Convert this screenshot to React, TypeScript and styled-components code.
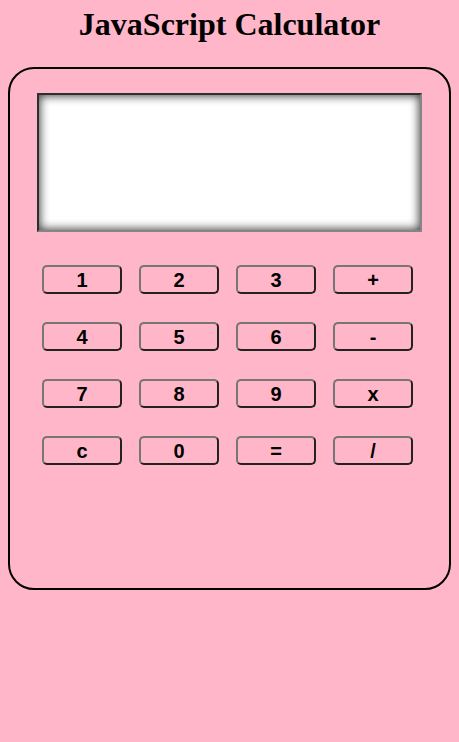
import React from "react";
import styled, { createGlobalStyle } from "styled-components";

const Global = createGlobalStyle`
  html, body { margin: 0; padding: 0; background: #ffb6c8; }
  body { font-family: "Liberation Serif", serif; }
`;

const Page = styled.div`
  padding: 0 8px 8px;
`;

const Title = styled.h1`
  margin: 0;
  padding-top: 6px;
  height: 67px;
  box-sizing: border-box;
  text-align: center;
  font-family: "Liberation Serif", serif;
  font-weight: bold;
  font-size: 32px;
  line-height: 37px;
  color: #000;
`;

const Calculator = styled.div`
  box-sizing: border-box;
  width: 443px;
  height: 523px;
  border: 2px solid #000;
  border-radius: 26px;
  padding: 24px 27px 0 27px;
`;

const Screen = styled.div`
  box-sizing: border-box;
  width: 385px;
  height: 139px;
  background: #fff;
  border-style: solid;
  border-width: 2px;
  border-color: #2e2e2e #858585 #858585 #2e2e2e;
  box-shadow: inset 0 0 10px 1px rgba(0, 0, 0, 0.75);
`;

const Keys = styled.div`
  display: grid;
  grid-template-columns: repeat(4, 80px);
  grid-auto-rows: 29px;
  column-gap: 17px;
  row-gap: 28px;
  margin-top: 33px;
  padding-left: 5px;
`;

const Key = styled.button`
  box-sizing: border-box;
  width: 80px;
  height: 29px;
  padding: 0;
  background: transparent;
  border-style: solid;
  border-width: 2px;
  border-color: #767676 #222 #222 #767676;
  border-radius: 5px;
  font-family: "Liberation Sans", Arial, sans-serif;
  font-weight: bold;
  font-size: 20px;
  color: #000;
  line-height: 1;
`;

const keys = ["1", "2", "3", "+", "4", "5", "6", "-", "7", "8", "9", "x", "c", "0", "=", "/"];

export default function App() {
  return (
    <Page>
      <Global />
      <Title>JavaScript Calculator</Title>
      <Calculator>
        <Screen />
        <Keys>
          {keys.map((k) => (
            <Key key={k}>{k}</Key>
          ))}
        </Keys>
      </Calculator>
    </Page>
  );
}
